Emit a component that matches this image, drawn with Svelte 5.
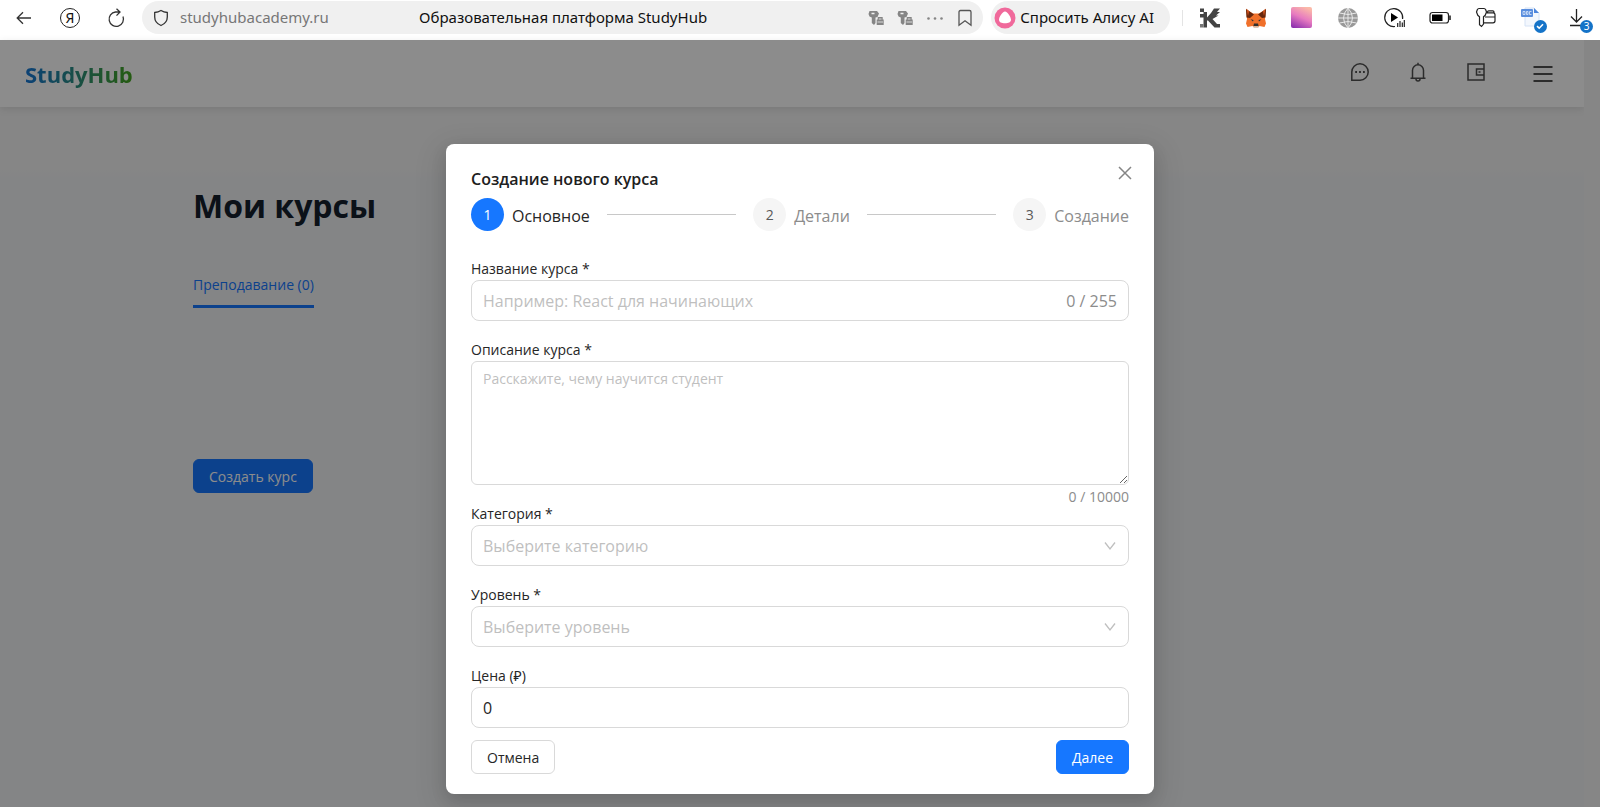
<script>
  let title = $state('');
  let description = $state('');
  let category = $state('');
  let level = $state('');
  let price = $state('0');

  const steps = ['Основное', 'Детали', 'Создание'];
</script>

<div class="window">
  <header class="chrome">
    <nav class="nav" aria-label="Навигация">
      <button aria-label="Назад">
        <svg width="20" height="20" viewBox="0 0 20 20"><path d="M17 10H3.5M9 4.2 3.2 10 9 15.8" /></svg>
      </button>
      <button class="ya"><span>Я</span></button>
      <button aria-label="Обновить">
        <svg width="20" height="20" viewBox="0 0 20 20"><path d="M17 8.5A7.2 7.2 0 1 1 9.5 4H14M10.5.8 14 4l-3.5 3.6" /></svg>
      </button>
    </nav>

    <div class="address">
      <div class="site">
        <svg width="16" height="18" viewBox="0 0 16 18"><path d="M8 1.5c2 1.2 4 1.8 6.300 2v4.500c0 4-2.300 6.800-6.300 8.500-4-1.700-6.300-4.500-6.300-8.500V3.500C4 3.300 6 2.700 8 1.500Z" /></svg>
        <span>studyhubacademy.ru</span>
      </div>
      <div class="page-title">Образовательная платформа StudyHub</div>
      <div class="tools">
        {#each [1, 2] as n (n)}
          <button aria-label="Пароль {n}">
            <svg class="solid" width="16" height="16" viewBox="0 0 16 16">
              <path fill-rule="evenodd" d="M1.500 1H9l2 2.500L9.500 7 7.500 7.500V13L6 15l-2.200-2V7.500L1.500 6.500.5 4Z M3.500 2.700v1.500h3V2.700Z" />
              <path d="M8.700 9.500h1V7h5v2.500h1V15h-7Z" />
              <path d="M10.800 9h2.700M9.500 12h5.500" stroke="#efefef" stroke-width=".8" />
            </svg>
          </button>
        {/each}
        <button aria-label="Ещё">
          <svg class="solid" width="18" height="16" viewBox="0 0 18 16"><circle cx="2.500" cy="8.500" r="1.300" /><circle cx="9" cy="8.500" r="1.300" /><circle cx="15.500" cy="8.500" r="1.300" /></svg>
        </button>
        <button aria-label="Закладка">
          <svg class="bookmark" width="16" height="18" viewBox="0 0 16 18"><path d="M2 3q0-1.500 1.500-1.500h9q1.500 0 1.500 1.500v13.300l-6-4.600-6 4.600Z" /></svg>
        </button>
      </div>
    </div>

    <button class="alice">
      <svg width="22" height="22" viewBox="0 0 22 22">
        <circle cx="11" cy="11" r="10.500" fill="#f0699b" />
        <path d="M11 4.500c2.600 0 6 5.600 6 8.300 0 2.400-2.600 3.500-6 3.500s-6-1.100-6-3.500c0-2.700 3.400-8.300 6-8.300Z" fill="#fff" />
      </svg>
      <span>Спросить Алису AI</span>
    </button>

    <div class="divider"></div>

    <div class="extensions">
      <button aria-label="Расширение K">
        <svg width="22" height="22" viewBox="0 0 22 22" fill="#444">
          <path d="M1 1.500h4v3.500H1ZM1 7h3.500V5H8v5.500L12 6l3-4.500h6L18 5h3l-4 3.500h2.500L13.500 12l4.500 5h3v3.500h-5.500L9 13.500H8v7H4.500V10.500H1Z" />
          <path d="M1 17h3.500v3.500H1Z" fill="#777" />
        </svg>
      </button>
      <button aria-label="MetaMask">
        <svg width="22" height="22" viewBox="0 0 22 22">
          <path d="M1 2l7 4.500h6L21 2l-1 10 1 4.500-1.500 3.500-5-1-1.500 1.500H9L7.500 19l-5 1L1 16.500 2 12Z" fill="#f0702a" />
          <path d="M1 2l8 5.500L5 11l-3.500-.5ZM21 2l-8 5.500 4 3.500 3.500-.5Z" fill="#66280f" />
          <path d="M1.500 1.500 4 4.500 3 9ZM20.500 1.500 18 4.500l1 4.500Z" fill="#d8551d" />
          <path d="M5.500 12.200l3 .8-.5 1.500ZM16.500 12.200l-3 .8.5 1.500Z" fill="#24343c" />
          <path d="M9 16.500h4l.6 2.500H8.400Z" fill="#33302e" />
          <path d="M8 19.300h6L13 21H9Z" fill="#d9c6b8" />
        </svg>
      </button>
      <button aria-label="Градиент"><span class="swatch"></span></button>
      <button aria-label="Глобус">
        <svg width="22" height="22" viewBox="0 0 22 22">
          <circle cx="11" cy="11" r="10" fill="#999" />
          <path d="M11 1v20M1 11h20M2.500 6q8.500 3 17 0M2.500 16q8.500-3 17 0M11 1Q2 11 11 21M11 1q9 10 0 20" fill="none" stroke="#e8e8e8" stroke-width="1" />
        </svg>
      </button>
      <button aria-label="Воспроизведение">
        <svg width="22" height="22" viewBox="0 0 22 22">
          <path d="M12 19.500A9 9 0 1 1 19.600 12" fill="none" stroke="#222" stroke-width="1.200" />
          <path d="M8 6v9l7-4.500Z" fill="#000" />
          <path d="M14.700 20v-4M17 20v-6M19.300 20v-4.500M21.300 20v-7" stroke="#222" stroke-width="1.200" />
        </svg>
      </button>
      <button aria-label="Батарея">
        <svg width="22" height="22" viewBox="0 0 22 22">
          <rect x="1" y="5.500" width="18.500" height="10.500" rx="2.500" fill="none" stroke="#222" stroke-width="1.200" />
          <rect x="3" y="7.500" width="10.500" height="6.500" fill="#000" />
          <path d="M21 8.500v4.500" stroke="#222" stroke-width="1.600" />
        </svg>
      </button>
      <button aria-label="Пароли">
        <svg width="22" height="22" viewBox="0 0 22 22" fill="none" stroke="#222" stroke-width="1.200">
          <path d="M4 1.500h5q1.200 0 1.700 1.200L11.500 5l-1.300 3.300-1.700 1.400V17l-2 2.500-2-1.700V9.700L2.800 8.300 1.500 5l.8-2.300Q2.800 1.500 4 1.500Z" />
          <path d="M12.500 5.500V5q0-1.200 1.200-1.200h4.100Q19 3.800 19 5v.8M11.500 5.800H18q2 0 2 2v6q0 2-2 2H8.500M10 10h10" />
        </svg>
      </button>
      <button class="with-badge" aria-label="Документы">
        <svg width="22" height="22" viewBox="0 0 22 22">
          <path d="M4 1h9l5 5v13H4Z" fill="#f3f7fd" stroke="#d5e2f5" />
          <path d="M13 1l5 5h-5Z" fill="#4d86dc" />
          <rect x="0" y="2" width="12" height="8" rx="1" fill="#5a8ede" />
          <path d="M2 4.500v3h2v-3ZM5.500 4.500v3h1.500v-3ZM10.500 4.500h-2v3h2" fill="none" stroke="#dce8fa" stroke-width=".8" />
        </svg>
        <span class="badge">
          <svg width="12" height="12" viewBox="0 0 12 12"><path d="M3 6.200l2.200 2L9 4.300" fill="none" stroke="#fff" stroke-width="1.600" /></svg>
        </span>
      </button>
      <button class="with-badge" aria-label="Загрузки">
        <svg width="22" height="22" viewBox="0 0 22 22"><path d="M9.500 2v13M4 9.500l5.500 5.500 5.500-5.500M3 18.500h13" fill="none" stroke="#222" stroke-width="1.300" /></svg>
        <span class="badge">3</span>
      </button>
    </div>
  </header>

  <div class="viewport">
    <div class="site-page">
      <div class="topbar">
        <a class="brand" href="#home">StudyHub</a>
        <div class="actions">
          <button aria-label="Сообщения">
            <svg width="20" height="20" viewBox="0 0 20 20"><path d="M1.800 18.200V10A8.200 8.200 0 1 1 10 18.200Z" /><path d="M5.200 10h1.800M9.100 10h1.800M13 10h1.800" stroke-width="1.800" /></svg>
          </button>
          <button aria-label="Уведомления">
            <svg width="20" height="20" viewBox="0 0 20 20"><path d="M10 .8v2M4.500 16V8.300a5.500 5.500 0 0 1 11 0V16M2.500 16.200h15M8 17a2 2 0 0 0 4 0" /></svg>
          </button>
          <button aria-label="Кошелёк">
            <svg width="20" height="20" viewBox="0 0 20 20"><path d="M18 7V2H2v16h16v-5M18 7h-7.500v6H18ZM12.500 10h2M18 7v6" /></svg>
          </button>
          <button class="menu" aria-label="Меню">
            <svg width="20" height="20" viewBox="0 0 20 20"><path d="M.5 3h19M.5 10h19M.5 17h19" stroke-width="1.800" /></svg>
          </button>
        </div>
      </div>
      <main class="content">
        <h1>Мои курсы</h1>
        <a class="tab" href="#teaching">Преподавание (0)</a>
        <button class="primary create">Создать курс</button>
      </main>
      <div class="scrollbar"></div>
    </div>

    <div class="mask">
      <form class="modal" aria-labelledby="modal-title" onsubmit={(e) => e.preventDefault()}>
        <button type="button" class="close" aria-label="Закрыть">
          <svg width="14" height="14" viewBox="0 0 14 14"><path d="M1 1l12 12M13 1 1 13" /></svg>
        </button>
        <h2 id="modal-title">Создание нового курса</h2>

        <ol class="steps">
          {#each steps as step, i (step)}
            {#if i > 0}<li class="line" aria-hidden="true"></li>{/if}
            <li class="step" class:active={i === 0}>
              <span class="num">{i + 1}</span>
              <span class="step-name">{step}</span>
            </li>
          {/each}
        </ol>

        <div class="field">
          <label for="title">Название курса *</label>
          <div class="control">
            <input id="title" placeholder="Например: React для начинающих" maxlength="255" bind:value={title} />
            <span class="count">{title.length} / 255</span>
          </div>
        </div>
        <div class="field area">
          <label for="description">Описание курса *</label>
          <textarea id="description" placeholder="Расскажите, чему научится студент" maxlength="10000" bind:value={description}></textarea>
          <span class="area-count">{description.length} / 10000</span>
        </div>
        <div class="field">
          <label for="category">Категория *</label>
          <div class="control">
            <select id="category" class:empty={!category} bind:value={category}>
              <option value="">Выберите категорию</option>
            </select>
            <svg class="chevron" width="12" height="12" viewBox="0 0 12 12"><path d="M1 2.500l5 6.500 5-6.500" /></svg>
          </div>
        </div>
        <div class="field">
          <label for="level">Уровень *</label>
          <div class="control">
            <select id="level" class:empty={!level} bind:value={level}>
              <option value="">Выберите уровень</option>
            </select>
            <svg class="chevron" width="12" height="12" viewBox="0 0 12 12"><path d="M1 2.500l5 6.500 5-6.500" /></svg>
          </div>
        </div>
        <div class="field">
          <label for="price">Цена (₽)</label>
          <div class="control">
            <input id="price" inputmode="numeric" bind:value={price} />
          </div>
        </div>

        <div class="footer">
          <button type="button" class="secondary">Отмена</button>
          <button type="submit" class="primary">Далее</button>
        </div>
      </form>
    </div>
  </div>
</div>

<style>
  :global(body) {
    margin: 0;
  }
  * {
    box-sizing: border-box;
  }
  button,
  input,
  select,
  textarea {
    font: inherit;
    color: inherit;
  }
  button {
    padding: 0;
    border: 0;
    background: none;
    cursor: pointer;
  }
  svg {
    display: block;
    flex: none;
  }
  .window {
    min-height: 100vh;
    display: flex;
    flex-direction: column;
    font-family: 'Open Sans', 'Noto Sans', sans-serif;
    font-size: 14px;
    color: #262626;
  }

  .chrome {
    height: 40px;
    padding: 1px 11px 6px 10px;
    display: flex;
    align-items: center;
    background: #fff;
    font-family: 'Noto Sans', sans-serif;
    font-size: 15px;
    color: #111;
  }
  .nav {
    display: flex;
    gap: 18px;
    margin-right: 12px;
  }
  .nav button {
    width: 28px;
    height: 28px;
    display: grid;
    place-items: center;
  }
  .nav svg,
  .address svg {
    fill: none;
    stroke: #333;
    stroke-width: 1.3;
  }
  .ya span {
    width: 20px;
    height: 20px;
    border: 1px solid #222;
    border-radius: 50%;
    font-size: 14px;
    line-height: 18px;
  }
  .address {
    flex: 1;
    height: 33px;
    padding: 0 10px 0 11px;
    border-radius: 17px;
    background: #f0f0f0;
    display: grid;
    grid-template-columns: 1fr auto 1fr;
    align-items: center;
  }
  .site {
    display: flex;
    align-items: center;
    gap: 11px;
    color: #777;
  }
  .page-title {
    white-space: nowrap;
  }
  .site span,
  .page-title,
  .alice span {
    padding-bottom: 2px;
  }
  .tools {
    display: flex;
    justify-content: flex-end;
    align-items: center;
    gap: 13px;
  }
  .address svg.solid {
    fill: #858585;
    stroke: none;
  }
  .address svg.bookmark {
    stroke: #555;
  }
  .alice {
    height: 33px;
    margin-left: 8px;
    padding: 0 16px 0 3px;
    border-radius: 17px;
    background: #f0f0f0;
    display: flex;
    align-items: center;
    gap: 4px;
    white-space: nowrap;
  }
  .divider {
    width: 1px;
    height: 16px;
    margin: 0 16px 0 12px;
    background: #e4e4e4;
  }
  .extensions {
    display: flex;
    gap: 24px;
  }
  .extensions button {
    width: 22px;
    height: 22px;
  }
  .swatch {
    display: block;
    width: 21px;
    height: 21px;
    border-radius: 2px;
    background: linear-gradient(25deg, #8c2fae 5%, #e77bc0 50%, #fbb9a8 90%);
  }
  .with-badge {
    position: relative;
  }
  .badge {
    position: absolute;
    right: -4px;
    bottom: -4px;
    width: 13px;
    height: 13px;
    border-radius: 50%;
    background: #1473c8;
    color: #fff;
    font-size: 10px;
    line-height: 13px;
    text-align: center;
  }

  .viewport {
    flex: 1;
    display: grid;
  }
  .site-page,
  .mask {
    grid-area: 1 / 1;
  }
  .site-page {
    display: grid;
    grid-template-columns: 1fr 16px;
    grid-template-rows: auto 1fr;
    background: linear-gradient(#f4f4f4 130px, #f0f2f5 140px);
  }
  .topbar {
    height: 67px;
    padding: 0 31px 0 25px;
    display: flex;
    align-items: center;
    justify-content: space-between;
    background: #fff;
    box-shadow: 0 2px 8px rgba(0, 0, 0, 0.1);
  }
  .scrollbar {
    grid-area: 1 / 2 / 3 / 3;
    background: #f5f5f5;
  }
  .brand {
    font-size: 22px;
    font-weight: 700;
    text-decoration: none;
    color: transparent;
    background: linear-gradient(90deg, #1677d8, #45a81e);
    background-clip: text;
  }
  .actions {
    display: flex;
    align-items: center;
    gap: 38px;
  }
  .actions button {
    padding-bottom: 4px;
  }
  .actions svg {
    fill: none;
    stroke: #505050;
    stroke-width: 1.5;
  }
  .actions .menu {
    margin-left: 9px;
    padding-bottom: 0;
  }
  .content {
    width: 100%;
    max-width: 1198px;
    margin: 0 auto;
    padding-top: 72px;
    display: flex;
    flex-direction: column;
    align-items: flex-start;
  }
  h1 {
    margin: 0;
    font-size: 32px;
    line-height: 54px;
    font-weight: 700;
    color: #14202c;
  }
  .tab {
    margin-top: 36px;
    padding: 4px 0 8px;
    border-bottom: 3px solid #1677ff;
    line-height: 24px;
    color: #1677ff;
    text-decoration: none;
  }
  .create {
    margin-top: 151px;
  }

  .mask {
    background: rgba(0, 0, 0, 0.45);
    padding: 104px 16px 13px;
    display: flex;
    justify-content: center;
    align-items: flex-start;
  }
  .modal {
    position: relative;
    width: 100%;
    max-width: 708px;
    padding: 23px 25px 20px;
    border-radius: 8px;
    background: #fff;
    box-shadow: 0 6px 16px rgba(0, 0, 0, 0.12), 0 9px 28px 8px rgba(0, 0, 0, 0.08);
  }
  .close {
    position: absolute;
    top: 22px;
    right: 22px;
  }
  .close svg {
    fill: none;
    stroke: #858585;
    stroke-width: 1.5;
  }
  h2 {
    margin: 0 0 7px;
    font-size: 16px;
    line-height: 24px;
    font-weight: 600;
    color: #202020;
  }
  .steps {
    margin: 0 0 27px;
    padding: 0;
    list-style: none;
    display: flex;
    align-items: center;
    gap: 17px;
  }
  .step {
    display: flex;
    align-items: center;
    gap: 8px;
    font-size: 16px;
    color: #8c8c8c;
  }
  .step-name {
    padding-top: 2px;
    line-height: 24px;
  }
  .num {
    width: 33px;
    height: 33px;
    border-radius: 50%;
    background: #f5f5f5;
    color: #595959;
    font-size: 14px;
    line-height: 34px;
    text-align: center;
  }
  .active {
    color: #262626;
  }
  .active .num {
    background: #1677ff;
    color: #fff;
  }
  .line {
    flex: 1;
    height: 1px;
    background: #c8c8c8;
  }
  .field {
    position: relative;
    margin-bottom: 18px;
  }
  .field label {
    display: block;
    line-height: 22px;
  }
  .control {
    height: 41px;
    padding: 0 11px;
    border: 1px solid #d9d9d9;
    border-radius: 8px;
    display: flex;
    align-items: center;
    font-size: 16px;
  }
  input,
  select {
    flex: 1;
    min-width: 0;
    height: 100%;
    padding: 0;
    border: 0;
    outline: 0;
    background: none;
    appearance: none;
  }
  ::placeholder,
  .empty {
    color: #bfbfbf;
    opacity: 1;
  }
  .count,
  .area-count {
    color: #8c8c8c;
  }
  .area-count {
    position: absolute;
    right: 0;
    bottom: -24px;
    line-height: 24px;
  }
  .chevron {
    margin-right: 1px;
    fill: none;
    stroke: #bfbfbf;
    stroke-width: 1.3;
  }
  textarea {
    display: block;
    width: 100%;
    height: 124px;
    padding: 5px 11px;
    border: 1px solid #d9d9d9;
    border-radius: 6px;
    outline: 0;
    line-height: 24px;
    resize: vertical;
  }
  .footer {
    margin-top: -6px;
    display: flex;
    justify-content: space-between;
  }
  .primary,
  .secondary {
    height: 34px;
    padding: 0 15px;
    border: 1px solid #d9d9d9;
    border-radius: 6px;
    background: #fff;
  }
  .primary {
    border-color: #1677ff;
    background: #1677ff;
    color: #fff;
  }
</style>
